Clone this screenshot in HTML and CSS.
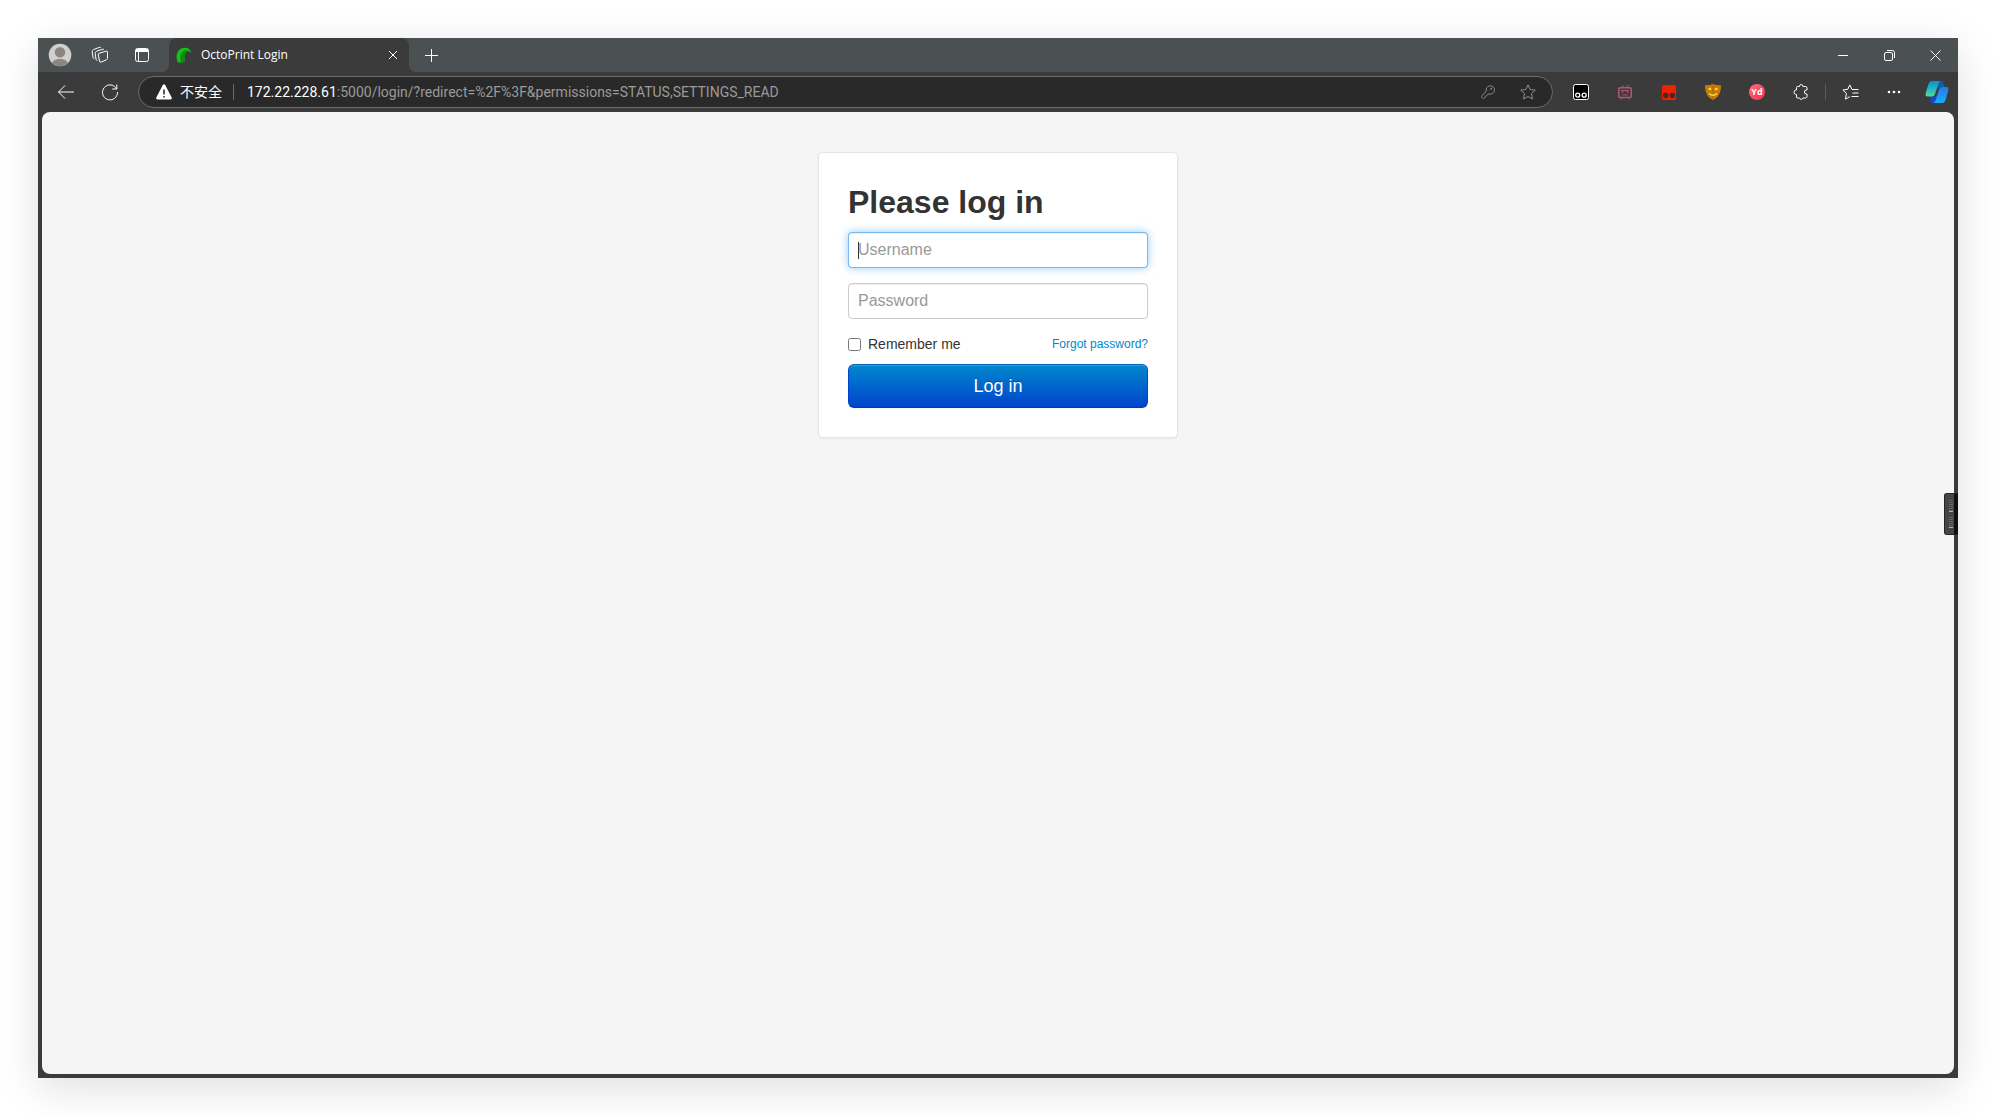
FILE: index.html
```html
<!DOCTYPE html>
<html lang="en">
<head>
  <meta charset="UTF-8">
  <title>OctoPrint Login</title>
  <link rel="stylesheet" href="styles.css">
</head>
<body>

<div class="window">
  <header class="titlebar">
    <button class="tool profile" aria-label="Profile">
      <svg width="24" height="24" viewBox="0 0 24 24">
        <defs><clipPath id="face"><circle cx="12" cy="12" r="11.3"/></clipPath></defs>
        <circle cx="12" cy="12" r="11.3" fill="#d2d0ce"/>
        <g clip-path="url(#face)" fill="#8a8683">
          <circle cx="12" cy="9.3" r="5.2"/>
          <ellipse cx="12" cy="21" rx="8" ry="5.3"/>
        </g>
      </svg>
    </button>
    <button class="tool workspaces" aria-label="Workspaces">
      <svg class="line" width="18" height="18" viewBox="0 0 18 18">
        <path d="M8 7.300l7.300-2.200q1.200-.3 1.200.9v6.400q0 .9-.9 1.300l-5.500 2.400q-1.300.5-1.600-.9L7.300 8.700q-.2-1.100.7-1.400z"/>
        <path d="M6.300 14.500q-1.100-.2-1.300-1.300L4.200 7.700q-.2-1.900 1.500-2.500l5.600-1.900q1.300-.3 1.700.6"/>
        <path d="M3.300 12.600q-1.100-.2-1.300-1.300L1.200 5.800q-.1-1.700 1.400-2.300L8.300 1.400q1.200-.3 1.700.5"/>
      </svg>
    </button>
    <button class="tool tab-actions" aria-label="Tab actions">
      <svg class="line" width="16" height="16" viewBox="0 0 16 16">
        <rect x="1.500" y="1.500" width="13" height="13" rx="2"/>
        <path d="M4.500 4.500v10"/>
        <path d="M2 3.500h12" stroke-width="3"/>
      </svg>
    </button>

    <div class="tab">
      <svg width="16" height="16" viewBox="0 0 16 16">
        <path d="M1.600 15.200C-1.200 8 1.800.8 9 .8c3.400 0 5.800 2 6.700 5.200-2-2-4.200-2.400-5.600-.8-1.900 2.200-2 6-1.300 9.400-2 1.200-5.200 1.200-7.200.6z" fill="#10c510"/>
        <path d="M5 15.400C3.400 10 5 4.400 9.200 3.400c2.300-.5 4.800.4 6.500 2.600-2-2-4.200-2.400-5.600-.8-1.900 2.200-2 6-1.300 9.400-1.100.6-2.200.8-3.800.8z" fill="#138813"/>
      </svg>
      <span class="tab-title">OctoPrint Login</span>
      <button class="tab-close" aria-label="Close tab">
        <svg class="line" width="10" height="10" viewBox="0 0 10 10"><path d="M1 1l8 8M9 1l-8 8"/></svg>
      </button>
    </div>
    <button class="tool new-tab" aria-label="New tab">
      <svg class="line" width="15" height="15" viewBox="0 0 15 15"><path d="M7.500 1v13M1 7.500h13"/></svg>
    </button>

    <div class="window-buttons">
      <button class="tool" aria-label="Minimize">
        <svg class="line" width="10" height="11" viewBox="0 0 10 11"><path d="M0 5.500h10"/></svg>
      </button>
      <button class="tool" aria-label="Restore">
        <svg class="line" width="11" height="11" viewBox="0 0 11 11">
          <rect x=".5" y="2.500" width="8" height="8" rx="1.500"/>
          <path d="M3 .5h5.500q2 0 2 2V8"/>
        </svg>
      </button>
      <button class="tool" aria-label="Close">
        <svg class="line" width="11" height="11" viewBox="0 0 11 11"><path d="M.5.5l10 10M10.500.5l-10 10"/></svg>
      </button>
    </div>
  </header>

  <nav class="toolbar">
    <button class="tool" aria-label="Back">
      <svg class="line" width="18" height="16" viewBox="0 0 18 16"><path d="M17 8H1.500M8 1.500L1.500 8 8 14.500"/></svg>
    </button>
    <button class="tool" aria-label="Refresh">
      <svg class="line" width="18" height="18" viewBox="0 0 18 18"><path d="M15.700 6A7.500 7.500 0 1 0 16.500 9M15.800 1.500V6h-4.500"/></svg>
    </button>

    <div class="address">
      <svg width="16" height="16" viewBox="0 0 16 16">
        <path d="M6.700 1.200q1.300-1.800 2.600 0l6.400 12.300q.7 1.800-1.200 2H1.500q-1.900-.2-1.200-2z" fill="#fff"/>
        <path d="M8 5.500v5M8 12v1.600" stroke="#292929" stroke-width="1.500"/>
      </svg>
      <span class="unsafe" lang="zh">不安全</span>
      <span class="url"><b>172.22.228.61</b>:5000/login/?redirect=%2F%3F&amp;permissions=STATUS,SETTINGS_READ</span>
      <button class="tool dim" aria-label="Saved passwords">
        <svg class="line" width="14" height="14" viewBox="0 0 14 14">
          <path d="M5.300 6.300A4.200 4.200 0 1 1 8 9L6.500 9.500 3.500 13q-1 .8-2 0l-.5-.5q-.8-1 0-2z"/>
          <circle cx="10.200" cy="3.800" r=".6"/>
        </svg>
      </button>
      <button class="tool dim" aria-label="Add to favorites">
        <svg class="line" width="16" height="16" viewBox="0 0 16 16"><path d="M8 .8l2.200 4.700 5.100.6-3.800 3.500 1 5.400L8 12.500 3.500 15l1-5.400L.7 6.100l5.100-.6z"/></svg>
      </button>
    </div>

    <div class="extensions">
      <button class="tool" aria-label="Tampermonkey">
        <svg width="16" height="16" viewBox="0 0 16 16">
          <rect x=".5" y=".5" width="15" height="15" rx="2" fill="#000" stroke="#fff"/>
          <g fill="#000" stroke="#fff" stroke-width="1.300"><circle cx="4.700" cy="11.200" r="2"/><circle cx="11.200" cy="11.200" r="2"/></g>
        </svg>
      </button>
      <button class="tool" aria-label="Bilibili helper">
        <svg width="16" height="16" viewBox="0 0 16 16" fill="none" stroke="#b3577a">
          <path d="M5 1.500l2.500 2M12 1L9 3.500M4 14v1.500M12 14v1.500"/>
          <rect x="1.800" y="3.800" width="12.400" height="9.700" rx="1" stroke-width="1.500"/>
          <path d="M4 6.500h8M4 8.500l2.500-1M9.500 7.500l2.500 1M5 11.500l1.500-1 1.500.7 1.500-.7 1.500 1"/>
        </svg>
      </button>
      <button class="tool" aria-label="Tampermonkey beta">
        <svg width="14" height="15" viewBox="0 0 14 15">
          <rect width="14" height="15" rx="2" fill="#ee2200"/>
          <circle cx="3.700" cy="10.500" r="2.800" fill="#4c2723"/><circle cx="10.300" cy="10.500" r="2.800" fill="#4c2723"/>
        </svg>
      </button>
      <button class="tool" aria-label="Mask">
        <svg width="16" height="16" viewBox="0 0 16 16">
          <path d="M0 1.200Q4 1.500 8 0q4 1.500 8 1.200C16.200 9 13 14 8 16 3 14-.2 9 0 1.200z" fill="#c77a08"/>
          <path d="M8 1.500v14" stroke="#a96606"/>
          <ellipse cx="4.800" cy="5" rx="1.500" ry="1.200" fill="#ffdc3c"/>
          <ellipse cx="11.200" cy="5" rx="1.500" ry="1.200" fill="#ffdc3c"/>
          <path d="M4 9.500q4 3.500 8 0" fill="none" stroke="#ffdc3c" stroke-width="1.500"/>
        </svg>
      </button>
      <button class="tool" aria-label="Youdao"><span class="youdao">Yd</span></button>
      <button class="tool" aria-label="Extensions">
        <svg class="line" width="16" height="16" viewBox="0 0 16 16">
          <path d="M3.500 3.500q0-1 1-1h2v-.3a1.700 1.700 0 0 1 3.400 0v.3h2.600q1.500 0 1.500 1.500V6h-.6a2 2 0 0 0 0 4h.6v2.500q0 1.500-1.500 1.500H10a1.800 1.800 0 0 1-3.500 0h-2q-1 0-1-1v-2.500h-.7a2.300 2.300 0 0 1 0-4.500h.7z"/>
        </svg>
      </button>
    </div>
    <div class="browser-menu">
      <button class="tool" aria-label="Favorites">
        <svg class="line" width="17" height="16" viewBox="0 0 17 16"><path d="M10 5.500L7.800.9 5.700 5.300.9 6l3.500 3.400-.9 5.700 4.300-2.400M10 5.500h6.500M10.500 9h6M9.500 12.500h7"/></svg>
      </button>
      <button class="tool" aria-label="Settings and more">
        <svg width="14" height="4" viewBox="0 0 14 4" fill="#fff"><circle cx="2" cy="2" r="1.300"/><circle cx="7" cy="2" r="1.300"/><circle cx="12" cy="2" r="1.300"/></svg>
      </button>
      <button class="tool copilot" aria-label="Copilot">
        <svg width="24" height="24" viewBox="0 0 24 24">
          <defs>
            <linearGradient id="teal" x1="0" y1="0" x2="0" y2="1"><stop offset="0" stop-color="#0c93c4"/><stop offset=".5" stop-color="#20b6c7"/><stop offset="1" stop-color="#58dc8c"/></linearGradient>
            <linearGradient id="blue" x1="0" y1="0" x2="0" y2="1"><stop offset="0" stop-color="#2b78e4"/><stop offset="1" stop-color="#15adff"/></linearGradient>
          </defs>
          <path d="M13 1h3q2 0 2.700 3l.8 3h-4q-2 0-3 3z" fill="#0962a8"/>
          <path d="M11 23H8q-2 0-2.500-3L5 16.500h4q2 0 3-3z" fill="#1747cf"/>
          <path d="M7 1h9q-2 0-2.700 3L10 14q-.8 2.500-3 2.500H2.500Q0 16.500.7 13L3.500 4Q4.500 1 7 1z" fill="url(#teal)"/>
          <path d="M17 23H8q2 0 2.700-3L14 9.500Q14.800 7 17 7h4.500q2.500 0 1.800 3.500L20.500 20q-1 3-3.500 3z" fill="url(#blue)"/>
        </svg>
      </button>
    </div>
  </nav>

  <main class="page">
    <form class="form-signin">
      <h2>Please log in</h2>
      <input class="field" type="text" placeholder="Username" aria-label="Username" autofocus>
      <input class="field" type="password" placeholder="Password" aria-label="Password">
      <div class="options">
        <label class="remember"><input type="checkbox"> Remember me</label>
        <a class="forgot" href="#">Forgot password?</a>
      </div>
      <button class="login" type="button">Log in</button>
    </form>
  </main>

  <!-- network meter docked on the right edge -->
  <div class="meter">
    <div class="bars up"></div>
    <div class="bars down"></div>
  </div>
</div>

</body>
</html>
```
FILE: styles.css
```css
* {
  box-sizing: border-box;
}

body {
  margin: 0;
  padding: 38px;
  height: 100vh;
  background: #fff;
  font-family: "Liberation Sans", Arial, sans-serif;
}

button {
  padding: 0;
  border: 0;
  background: none;
  font-family: inherit;
}

svg {
  display: block;
  flex: none;
}

.line {
  fill: none;
  stroke: currentColor;
  stroke-linejoin: round;
}

/* Browser window */
.window {
  position: relative;
  display: flex;
  flex-direction: column;
  height: 100%;
  background: #3b3b3b;
  box-shadow: 0 10px 40px rgba(0, 0, 0, 0.13);
  color: #fff;
  font-family: "Open Sans", "Noto Sans CJK SC", sans-serif;
}

.tool {
  display: flex;
  align-items: center;
  justify-content: center;
  flex: none;
  width: 44px;
  height: 32px;
  color: #fff;
}

.titlebar {
  display: flex;
  align-items: center;
  height: 34px;
  background: #4b5052;
}

.workspaces {
  width: 36px;
}

.tab-actions {
  width: 48px;
}

.tab {
  position: relative;
  display: flex;
  align-items: center;
  width: 240px;
  height: 34px;
  margin-left: 3px;
  padding: 0 8px 0 7px;
  border-radius: 8px 8px 0 0;
  background: #3b3b3b;
}

/* curved feet of the active tab */
.tab::before,
.tab::after {
  content: "";
  position: absolute;
  bottom: 0;
  width: 8px;
  height: 8px;
}

.tab::before {
  left: -8px;
  background: radial-gradient(circle at 0 0, transparent 8px, #3b3b3b 8px);
}

.tab::after {
  right: -8px;
  background: radial-gradient(circle at 100% 0, transparent 8px, #3b3b3b 8px);
}

.tab-title {
  flex: 1;
  margin-left: 9px;
  font-size: 12px;
  line-height: 16px;
}

.tab-close {
  display: flex;
  align-items: center;
  justify-content: center;
  width: 16px;
  height: 16px;
  color: #fff;
}

.window-buttons {
  display: flex;
  margin-left: auto;
}

.window-buttons .tool {
  width: 46px;
}

.toolbar {
  display: flex;
  align-items: center;
  height: 40px;
  padding-left: 6px;
}

.address {
  display: flex;
  align-items: center;
  flex: 1;
  min-width: 0;
  height: 32px;
  margin-left: 6px;
  padding: 0 4px 0 17px;
  border: 1px solid #6b6b6b;
  border-radius: 16px;
  background: #292929;
}

.address .tool {
  width: 40px;
}

.address .dim {
  color: #8d8d8d;
}

.unsafe {
  margin-left: 8px;
  padding-right: 11px;
  border-right: 1px solid #6b6b6b;
  font-size: 14px;
  line-height: 16px;
}

.url {
  flex: 1;
  margin-left: 13px;
  overflow: hidden;
  color: #9a9a9a;
  font-family: Roboto, "Open Sans", sans-serif;
  font-size: 14px;
  line-height: 20px;
  white-space: nowrap;
}

.url b {
  color: #fff;
  font-weight: 400;
}

.extensions {
  display: flex;
  margin-left: 6px;
}

.browser-menu {
  display: flex;
  align-items: center;
}

.browser-menu::before {
  content: "";
  width: 1px;
  height: 16px;
  margin: 0 2px;
  background: #5c5c5c;
}

.copilot {
  width: 42px;
}

.youdao {
  width: 16px;
  height: 16px;
  border-radius: 50%;
  background: linear-gradient(135deg, #ff6f7d, #f92d4b);
  color: #fff;
  font-size: 9px;
  font-weight: 700;
  line-height: 15px;
  text-align: center;
}

/* Login page */
.page {
  flex: 1;
  margin: 0 4px 4px;
  padding: 40px 0;
  border-radius: 8px;
  background: #f5f5f5;
  color: #333;
  font-family: "Liberation Sans", Arial, sans-serif;
  font-size: 14px;
  line-height: 20px;
}

.form-signin {
  width: 360px;
  margin: 0 auto;
  padding: 29px;
  border: 1px solid #e5e5e5;
  border-radius: 5px;
  background: #fff;
  box-shadow: 0 1px 2px rgba(0, 0, 0, 0.05);
}

.form-signin h2 {
  margin: 0 0 10px;
  font-size: 32px;
  line-height: 40px;
}

.field {
  display: block;
  width: 100%;
  height: 36px;
  margin-bottom: 15px;
  padding: 7px 9px;
  border: 1px solid #ccc;
  border-radius: 4px;
  background: #fff;
  box-shadow: inset 0 1px 1px rgba(0, 0, 0, 0.075);
  color: #555;
  font-family: inherit;
  font-size: 16px;
}

.field::placeholder {
  color: #999;
}

.field:focus {
  border-color: rgba(82, 168, 236, 0.8);
  outline: 0;
  box-shadow: inset 0 1px 1px rgba(0, 0, 0, 0.075), 0 0 8px rgba(82, 168, 236, 0.6);
}

/* steady caret while the field is empty */
.field:focus:placeholder-shown {
  background: #fff linear-gradient(#333, #333) 9px 9px / 1px 17px no-repeat;
  caret-color: transparent;
}

.options {
  display: flex;
  align-items: center;
  justify-content: space-between;
  margin-bottom: 10px;
}

.remember {
  display: flex;
  align-items: center;
  gap: 7px;
}

.remember input {
  width: 13px;
  height: 13px;
  margin: 0;
}

.forgot {
  color: #08c;
  font-size: 12px;
  text-decoration: none;
}

.login {
  display: block;
  width: 100%;
  height: 44px;
  border: 1px solid;
  border-color: #0062b5 #04c #003ab0;
  border-radius: 6px;
  background: linear-gradient(to bottom, #08c, #04c);
  box-shadow: inset 0 1px 0 rgba(255, 255, 255, 0.2), 0 1px 2px rgba(0, 0, 0, 0.05);
  color: #fff;
  font-size: 18px;
  text-shadow: 0 -1px 0 rgba(0, 0, 0, 0.25);
}

/* Network meter */
.meter {
  position: absolute;
  top: 455px;
  right: 0;
  display: flex;
  flex-direction: column;
  gap: 5px;
  width: 14px;
  height: 42px;
  padding: 6px 4px;
  border: 1px solid #252525;
  border-right: 0;
  border-radius: 3px 0 0 3px;
  background: linear-gradient(to right, #454545 9px, #101010 9px);
}

.bars {
  width: 4px;
  height: 13px;
  background: repeating-linear-gradient(to bottom, #666 0 1px, transparent 1px 2px);
}

.up {
  border-bottom: 1px solid #f5a623;
}

.down {
  border-bottom: 1px solid #8fe32b;
}
```
